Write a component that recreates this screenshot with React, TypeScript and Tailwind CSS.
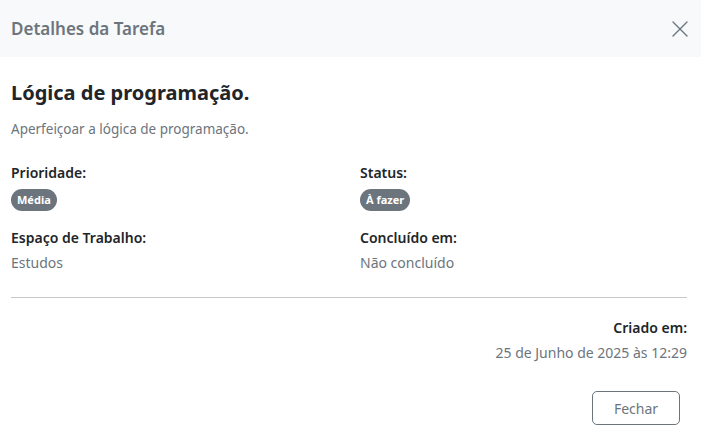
import { X } from "lucide-react";

function Badge({ children }: { children: React.ReactNode }) {
  return (
    <span className="inline-flex h-[22px] items-center rounded-full bg-[#6c757d] px-[6px] text-[11px] font-bold text-white">
      {children}
    </span>
  );
}

function Field({ label, children, badge }: { label: string; children: React.ReactNode; badge?: boolean }) {
  return (
    <div>
      <p className="text-[14px] font-semibold leading-[20px] text-[#212529]">{label}</p>
      <div className={badge ? "mt-[3px]" : "mt-[5px]"}>{children}</div>
    </div>
  );
}

export default function App() {
  return (
    <div className="h-[437px] w-[701px] bg-white font-['Noto_Sans',sans-serif]">
      <div className="flex h-[57px] items-center justify-between bg-[#f8f9fa] pl-[11px] pr-[7px]">
        <h1 className="text-[17px] font-semibold text-[#6c757d]">Detalhes da Tarefa</h1>
        <X className="h-[28px] w-[28px] text-[#6c757d]" strokeWidth={1.2} />
      </div>

      <div className="pl-[11px] pr-[14px]">
        <h2 className="mt-[21px] text-[20px] font-bold leading-[30px] text-[#212529]">Lógica de programação.</h2>
        <p className="mt-[11px] text-[13.5px] leading-[20px] text-[#6c757d]">Aperfeiçoar a lógica de programação.</p>

        <div className="mt-[24px] grid grid-cols-[349px_1fr] gap-y-[17px]">
          <Field label="Prioridade:" badge>
            <Badge>Média</Badge>
          </Field>
          <Field label="Status:" badge>
            <Badge>À fazer</Badge>
          </Field>
          <Field label="Espaço de Trabalho:">
            <p className="text-[14px] leading-[20px] text-[#6c757d]">Estudos</p>
          </Field>
          <Field label="Concluído em:">
            <p className="text-[14px] leading-[20px] text-[#6c757d]">Não concluído</p>
          </Field>
        </div>

        <div className="mt-[24px] border-t border-[#c8c8c8]" />

        <div className="mt-[20px] text-right">
          <p className="text-[14px] font-semibold leading-[20px] text-[#212529]">Criado em:</p>
          <p className="mt-[5px] text-[14px] leading-[20px] text-[#6c757d]">25 de Junho de 2025 às 12:29</p>
        </div>

        <div className="mt-[28px] flex justify-end pr-[7px]">
          <button className="h-[34px] w-[88px] rounded-[5px] border border-[#6c757d] text-[14px] text-[#6c757d]">
            Fechar
          </button>
        </div>
      </div>
    </div>
  );
}
